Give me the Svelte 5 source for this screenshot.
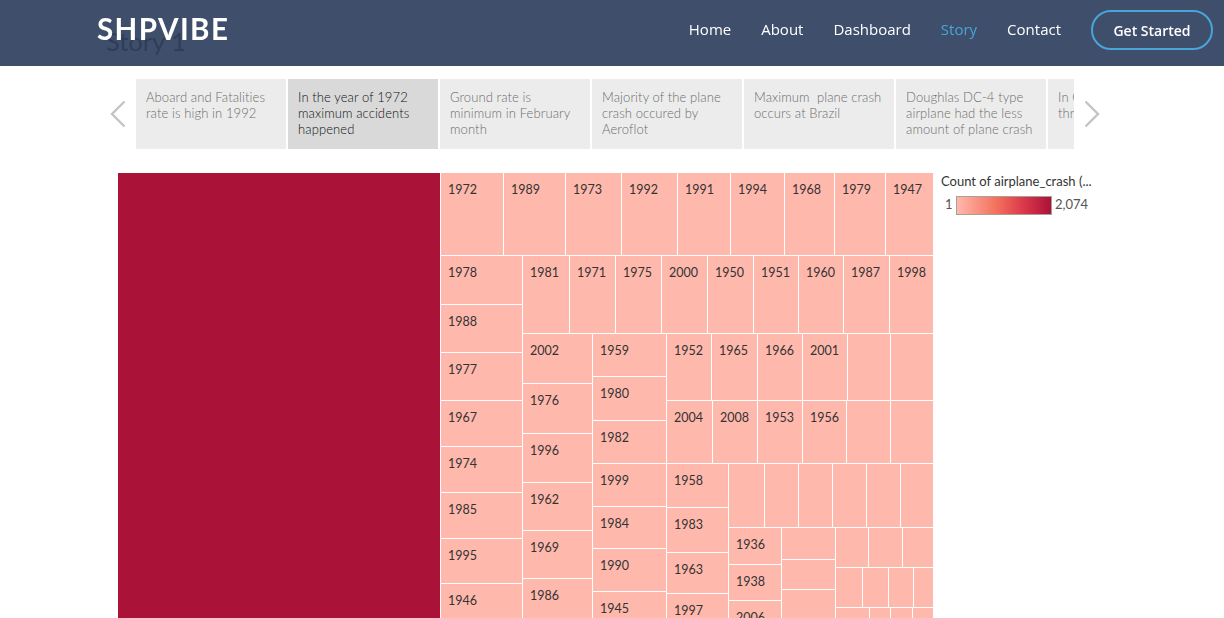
<script>
	const row = (s, ...c) => ({ d: 'row', s, c })
	const col = (s, ...c) => ({ d: 'col', s, c })
	const cell = (s, t = '') => ({ s, t })

	// sizes are in px, the last child of a group takes what is left
	const tree = row(815,
		cell(322),
		col(492,
			row(82,
				cell(62, '1972'), cell(61, '1989'), cell(55, '1973'), cell(55, '1992'), cell(52, '1991'),
				cell(53, '1994'), cell(49, '1968'), cell(50, '1979'), cell(47, '1947')
			),
			row(0,
				col(81,
					cell(48, '1978'), cell(47, '1988'), cell(47, '1977'), cell(45, '1967'),
					cell(45, '1974'), cell(45, '1985'), cell(44, '1995'), cell(40, '1946')
				),
				col(0,
					row(77,
						cell(46, '1981'), cell(45, '1971'), cell(45, '1975'), cell(45, '2000'), cell(45, '1950'),
						cell(44, '1951'), cell(44, '1960'), cell(45, '1987'), cell(43, '1998')
					),
					row(0,
						col(69,
							cell(49, '2002'), cell(49, '1976'), cell(48, '1996'),
							cell(47, '1962'), cell(47, '1969'), cell(40, '1986')
						),
						col(73,
							cell(42, '1959'), cell(43, '1980'), cell(42, '1982'), cell(42, '1999'),
							cell(41, '1984'), cell(42, '1990'), cell(40, '1945')
						),
						col(0,
							row(66,
								cell(44, '1952'), cell(45, '1965'), cell(44, '1966'), cell(44, '2001'), cell(42), cell(42)
							),
							row(62,
								cell(45, '2004'), cell(44, '2008'), cell(44, '1953'), cell(43, '1956'), cell(43), cell(42)
							),
							row(0,
								col(61, cell(43, '1958'), cell(44, '1983'), cell(40, '1963'), cell(40, '1997')),
								col(0,
									row(63, cell(35), cell(33), cell(33), cell(33), cell(33), cell(32)),
									row(0,
										col(52, cell(36, '1936'), cell(35, '1938'), cell(40, '2006')),
										col(53, cell(31), cell(29), cell(40)),
										col(0,
											row(39, cell(32), cell(33), cell(30)),
											row(39, cell(26), cell(25), cell(24), cell(19)),
											row(0, cell(33), cell(20), cell(21), cell(20))
										)
									)
								)
							)
						)
					)
				)
			)
		)
	)

	const points = [
		'Aboard and Fatalities rate is high in 1992',
		'In the year of 1972 maximum accidents happened',
		'Ground rate is minimum in February month',
		'Majority of the plane crash occured by Aeroflot',
		'Maximum  plane crash occurs at Brazil',
		'Doughlas DC-4 type airplane had the less amount of plane crash',
		'In Cuba most crash through'
	]
	const links = ['Home', 'About', 'Dashboard', 'Story', 'Contact']
</script>

{#snippet node(n)}
	{#if n.c}
		<div class={n.d} style="flex: {n.s ? `0 0 ${n.s}px` : '1 1 0'}">
			{#each n.c as child}
				{@render node(child)}
			{/each}
		</div>
	{:else if n.s === 322}
		<div class="cell top" style="flex: 0 0 322px"></div>
	{:else}
		<div class="cell" style="flex: 0 0 {n.s}px">{n.t}</div>
	{/if}
{/snippet}

<header>
	<div class="logo">SHPVIBE</div>
	<nav>
		{#each links as link}
			<a href="#top" class:active={link === 'Story'}>{link}</a>
		{/each}
		<a class="cta" href="#top">Get Started</a>
	</nav>
</header>

<main>
	<h1>Story 1</h1>

	<div class="story-nav">
		<button class="prev" aria-label="Previous">
			<svg width="16" height="28" viewBox="0 0 16 28"><path d="M14.5 1.5 2 14l12.5 12.5" /></svg>
		</button>
		<div class="points">
			{#each points as point, i}
				<div class="point" class:current={i === 1}>{point}</div>
			{/each}
		</div>
		<button class="next" aria-label="Next">
			<svg width="16" height="28" viewBox="0 0 16 28"><path d="M1.5 1.5 14 14 1.5 26.5" /></svg>
		</button>
	</div>

	<div class="viz">
		<div class="treemap">
			{@render node(tree)}
		</div>
		<aside>
			<div class="legend-title">Count of airplane_crash (...</div>
			<div class="legend-scale">
				<span class="min">1</span>
				<span class="ramp"></span>
				<span class="max">2,074</span>
			</div>
		</aside>
	</div>
</main>

<style>
	:global(body) {
		overflow: hidden;
		background: #fff;
	}

	header {
		position: fixed;
		top: 0;
		left: 0;
		right: 0;
		z-index: 2;
		height: 66px;
		display: flex;
		align-items: center;
		justify-content: space-between;
		padding: 0 11px 6px 97px;
		box-sizing: border-box;
		background: rgba(42, 59, 90, 0.9);
		font-family: "Open Sans", sans-serif;
	}

	.logo {
		margin-bottom: 3px;
		color: #fff;
		font-family: Lato, sans-serif;
		font-size: 29.5px;
		font-weight: 700;
		letter-spacing: 1.4px;
		line-height: 36px;
	}

	nav {
		display: flex;
		align-items: center;
		gap: 30px;
	}

	nav a {
		padding-bottom: 2px;
		color: #fff;
		font-size: 15px;
		text-decoration: none;
	}

	nav a.active {
		color: #47a6d9;
	}

	nav a.cta {
		width: 122px;
		height: 40px;
		padding-bottom: 0;
		box-sizing: border-box;
		display: flex;
		align-items: center;
		justify-content: center;
		border: 2px solid #47a6d9;
		border-radius: 20px;
		font-size: 14px;
		font-weight: 600;
	}

	main {
		font-family: Lato, sans-serif;
	}

	h1 {
		margin: 0;
		padding: 26px 0 0 106px;
		color: #555;
		font-size: 25.5px;
		font-weight: 400;
		line-height: 30px;
	}

	.story-nav {
		display: flex;
		height: 70px;
		margin-top: 23px;
		padding-left: 106px;
	}

	.story-nav button {
		width: 30px;
		padding: 0;
		border: 0;
		background: none;
		display: flex;
		align-items: center;
		justify-content: center;
	}

	.story-nav .prev {
		padding-right: 6px;
	}

	.story-nav .next {
		padding-left: 6px;
	}

	.story-nav svg {
		fill: none;
		stroke: #c4c4c4;
		stroke-width: 2.4;
	}

	.points {
		width: 938px;
		display: flex;
		gap: 2px;
		overflow: hidden;
	}

	.point {
		flex: 0 0 150px;
		box-sizing: border-box;
		padding: 10px 10px 0;
		background: #ececec;
		color: #6c6c6c;
		font-size: 13px;
		font-weight: 300;
		letter-spacing: 0.1px;
		line-height: 16px;
		white-space: pre-wrap;
	}

	.point.current {
		background: #d9d9d9;
		color: #111;
	}

	.viz {
		display: flex;
		margin-top: 24px;
		padding-left: 118px;
	}

	.treemap {
		flex: 0 0 815px;
		height: 445px;
		display: flex;
		overflow: hidden;
	}

	.row,
	.col {
		display: flex;
		gap: 1px;
		min-width: 0;
		min-height: 0;
	}

	.col {
		flex-direction: column;
	}

	.cell {
		box-sizing: border-box;
		padding: 9px 0 0 7px;
		overflow: hidden;
		background: #ffb8ac;
		color: #333;
		font-size: 12.5px;
		line-height: 15px;
	}

	.cell.top {
		background: #ab1237;
	}

	aside {
		margin-left: 8px;
		color: #333;
		font-size: 13px;
	}

	.legend-title {
		margin-top: 1px;
		line-height: 15px;
	}

	.legend-scale {
		display: flex;
		align-items: center;
		margin-top: 7px;
		color: #555;
		font-size: 13px;
		line-height: 15px;
	}

	.min,
	.max {
		padding-bottom: 2px;
	}

	.min {
		width: 15px;
		padding-left: 4px;
		box-sizing: border-box;
	}

	.ramp {
		width: 96px;
		height: 19px;
		margin-right: 3px;
		box-sizing: border-box;
		border: 1px solid #a5a298;
		background: linear-gradient(to right, #ffb8ac, #f4705d 42%, #d9364a 72%, #ab1237);
	}
</style>
